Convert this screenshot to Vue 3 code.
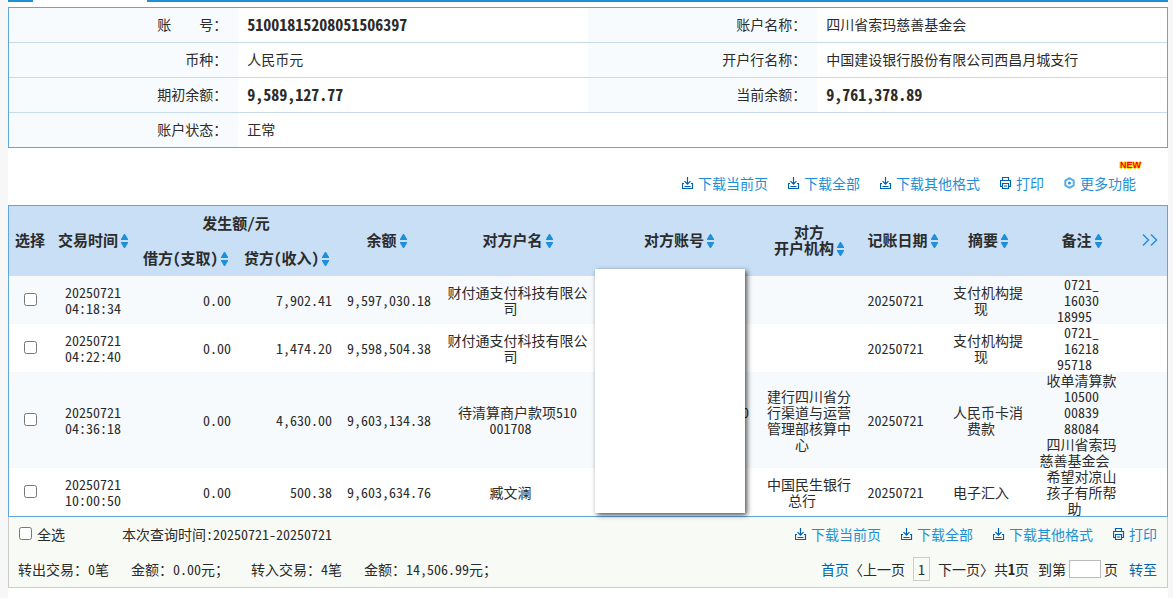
<script setup>
import { h } from 'vue'

const account = [
  [{ label: '账\u3000\u3000\u3000\u3000号：', value: '51001815208051506397', strong: true }, { label: '账户名称：', value: '四川省索玛慈善基金会' }],
  [{ label: '币种：', value: '人民币元' }, { label: '开户行名称：', value: '中国建设银行股份有限公司西昌月城支行' }],
  [{ label: '期初余额：', value: '9,589,127.77', strong: true }, { label: '当前余额：', value: '9,761,378.89', strong: true }],
  [{ label: '账户状态：', value: '正常' }],
]

const columnWidths = [42, 84, 101, 101, 99, 163, 160, 100, 87, 84, 103, 34]

const tail = '\u00a0\u00a0'
const rows = [
  {
    time: '20250721\n04:18:34', debit: '0.00', credit: '7,902.41', balance: '9,597,030.18',
    name: '财付通支付科技有限公\n司' + tail, number: '', bank: '', date: '20250721' + tail,
    summary: '支付机构提\n现' + tail, remark: '0721_\n16030\n18995' + tail,
  },
  {
    time: '20250721\n04:22:40', debit: '0.00', credit: '1,474.20', balance: '9,598,504.38',
    name: '财付通支付科技有限公\n司' + tail, number: '', bank: '', date: '20250721' + tail,
    summary: '支付机构提\n现' + tail, remark: '0721_\n16218\n95718' + tail,
  },
  {
    time: '20250721\n04:36:18', debit: '0.00', credit: '4,630.00', balance: '9,603,134.38',
    name: '待清算商户款项510\n001708' + tail, number: '0\n\u00a0',
    bank: '建行四川省分\n行渠道与运营\n管理部核算中\n心' + tail, date: '20250721' + tail,
    summary: '人民币卡消\n费款' + tail, remark: '收单清算款\n10500\n00839\n88084\n四川省索玛\n慈善基金会' + tail,
  },
  {
    time: '20250721\n10:00:50', debit: '0.00', credit: '500.38', balance: '9,603,634.76',
    name: '臧文澜' + tail, number: '', bank: '中国民生银行\n总行' + tail, date: '20250721' + tail,
    summary: '电子汇入' + tail, remark: '希望对凉山\n孩子有所帮\n助' + tail,
  },
]

const actions = [
  { icon: 'download', text: '下载当前页' },
  { icon: 'download', text: '下载全部' },
  { icon: 'download', text: '下载其他格式' },
  { icon: 'print', text: '打印' },
]

const totals = ['转出交易：0笔', '金额：0.00元；', '转入交易：4笔', '金额：14,506.99元；']

const shapes = {
  download: [
    h('path', { d: 'M5.500 0v7M2.500 4.200 5.500 7.200l3-3M2 6.500H.5v5h10v-5H9M2.500 9.500h6' }),
  ],
  print: [
    h('path', { d: 'M2.500 3.500v-3h6v3M2.500 9.500h-2v-6h10v6h-2M2.500 6.500h6v5h-6zM4 9h3' }),
  ],
  gear: [
    h('path', { d: 'M5.500 1.200 9.700 3.600v4.800L5.500 10.800 1.300 8.400V3.600z', 'stroke-width': 2, 'stroke-linejoin': 'round', stroke: '#5aade2' }),
    h('circle', { cx: 5.5, cy: 6, r: 1.6, fill: '#3b9bdb', stroke: 'none' }),
  ],
}

const Icon = (props) =>
  h('svg', { width: 12, height: 12, viewBox: '0 0 12 12', fill: 'none', stroke: '#0060b0', 'stroke-width': 1.2, 'aria-hidden': 'true' }, shapes[props.name])
Icon.props = ['name']

const Sort = () =>
  h('svg', { class: 'sort', width: 7, height: 14, viewBox: '0 0 7 14', fill: '#1e8fd8', 'aria-hidden': 'true' }, [
    h('path', { d: 'M3 0h1l3 5v1H0V5zM0 8h7v1l-3 5H3L0 9z' }),
  ])
</script>

<template>
  <main class="page">
    <div class="tabs"><span class="bar first"></span><span class="bar rest"></span></div>

    <table class="account">
      <colgroup><col class="k" /><col class="v" /><col class="k" /><col class="v" /></colgroup>
      <tbody>
        <tr v-for="(pair, i) in account" :key="i">
          <template v-for="item in pair" :key="item.label">
            <th scope="row">{{ item.label }}</th>
            <td :class="{ strong: item.strong }" :colspan="pair.length === 1 ? 3 : 1">{{ item.value }}</td>
          </template>
        </tr>
      </tbody>
    </table>

    <nav class="actions top">
      <a v-for="a in actions" :key="a.text" href="#"><Icon :name="a.icon" />{{ a.text }}</a>
      <a href="#" class="more"><Icon name="gear" />更多功能<span class="new">NEW</span></a>
    </nav>

    <section class="list">
      <table class="records">
        <colgroup><col v-for="(w, i) in columnWidths" :key="i" :style="{ width: w + 'px' }" /></colgroup>
        <thead>
          <tr>
            <th rowspan="2">选择</th>
            <th rowspan="2">交易时间<Sort /></th>
            <th colspan="2">发生额/元</th>
            <th rowspan="2">余额<Sort /></th>
            <th rowspan="2">对方户名<Sort /></th>
            <th rowspan="2">对方账号<Sort /></th>
            <th rowspan="2">对方<br />开户机构<Sort /></th>
            <th rowspan="2">记账日期<Sort /></th>
            <th rowspan="2">摘要<Sort /></th>
            <th rowspan="2">备注<Sort /></th>
            <th rowspan="2">
              <a href="#" class="expand" aria-label="展开">
                <svg width="16" height="12" viewBox="0 0 16 12" fill="none" stroke="#1e8fd8" stroke-width="1.4"><path d="M1 .5 6.500 6 1 11.500M9 .5 14.500 6 9 11.500" /></svg>
              </a>
            </th>
          </tr>
          <tr>
            <th>借方(支取)<Sort /></th>
            <th>贷方(收入)<Sort /></th>
          </tr>
        </thead>
        <tbody>
          <tr v-for="(r, i) in rows" :key="i">
            <td><input type="checkbox" :aria-label="'选择 ' + r.time" /></td>
            <td>{{ r.time }}</td>
            <td class="right">{{ r.debit }}</td>
            <td class="right">{{ r.credit }}</td>
            <td class="right">{{ r.balance }}</td>
            <td>{{ r.name }}</td>
            <td class="number">{{ r.number }}</td>
            <td>{{ r.bank }}</td>
            <td>{{ r.date }}</td>
            <td>{{ r.summary }}</td>
            <td>{{ r.remark }}</td>
            <td></td>
          </tr>
        </tbody>
      </table>
      <div class="cover"></div>
    </section>

    <footer class="foot">
      <div class="line">
        <label class="all"><input type="checkbox" />全选</label>
        <span class="period">本次查询时间:20250721-20250721</span>
        <nav class="actions">
          <a v-for="a in actions" :key="a.text" href="#"><Icon :name="a.icon" />{{ a.text }}</a>
        </nav>
      </div>
      <div class="line">
        <div class="totals"><span v-for="(t, i) in totals" :key="i">{{ t }}</span></div>
        <div class="pager">
          <a href="#">首页</a>
          <span>〈上一页</span>
          <span class="current">1</span>
          <span>下一页〉</span>
          <span>共<b>1</b>页</span>
          <label class="goto">到第<input type="text" />页</label>
          <a href="#">转至</a>
        </div>
      </div>
    </footer>
  </main>
</template>

<style>
body {
  background: #f7f7f7;
}
</style>

<style scoped>
.page {
  margin: 0 5px 0 8px;
  min-height: 100vh;
  background: #fff;
  color: #2b2b2b;
  font: 14px/16px "Noto Sans CJK SC", sans-serif;
  font-feature-settings: "hwid";
}
a {
  color: #1e8fd5;
  text-decoration: none;
}
table {
  width: 100%;
  table-layout: fixed;
  border-spacing: 0;
  box-sizing: border-box;
}
input {
  margin: 0;
}
input[type="checkbox"] {
  width: 13px;
  height: 13px;
}
.tabs {
  display: flex;
  gap: 114px;
  height: 7px;
}
.bar {
  height: 2px;
  background: #1e8fd8;
}
.first {
  width: 25px;
}
.rest {
  flex: 1;
}
.account {
  border: 1px solid #5fa6de;
}
.account .k {
  width: 19.8%;
}
.account .v {
  width: 30.2%;
}
.account th,
.account td {
  height: 32px;
  padding: 0 11px 2px 9px;
  border-bottom: 1px solid #c8d9ea;
  font-weight: normal;
  text-align: left;
  white-space: nowrap;
}
.account th {
  background: #f7fbfe;
  text-align: right;
}
.account tr:last-child > * {
  border-bottom: 0;
}
.account .strong {
  font-size: 16px;
  font-weight: bold;
}
.actions {
  display: flex;
  gap: 20px;
}
.actions a {
  display: flex;
  align-items: center;
  gap: 4px;
  white-space: nowrap;
}
.top {
  justify-content: flex-end;
  padding: 27px 32px 14px 0;
}
.more {
  position: relative;
}
.new {
  position: absolute;
  right: -5px;
  top: -15px;
  color: #f00;
  font: bold 9px/10px "Liberation Sans", sans-serif;
  text-shadow: 1px 0 #fd0, -1px 0 #fd0, 0 1px #fd0, 0 -1px #fd0;
}
.list {
  position: relative;
}
.records {
  border: 1px solid #5fa6de;
}
.records th {
  height: 33px;
  padding: 0 0 2px;
  background: #c8dff5;
  font-size: 15px;
  white-space: nowrap;
}
.sort {
  margin-left: 3px;
  vertical-align: -2px;
}
.records td {
  height: 48px;
  padding: 0 5px;
  text-align: center;
  white-space: pre;
}
.records tr:nth-child(odd) td {
  background: #f6fafd;
}
.records td.right {
  text-align: right;
}
.records td.number {
  padding-right: 10px;
  text-align: right;
}
.expand svg {
  display: block;
  margin: 0 auto;
}
.cover {
  position: absolute;
  left: 587px;
  top: 64px;
  bottom: 4px;
  width: 150px;
  background: #fff;
  box-shadow: 2px 2px 5px rgba(0, 0, 0, 0.7);
}
.foot {
  border: 1px solid #ccc;
  border-top: 0;
  background: #f8faf5;
}
.line {
  display: flex;
  align-items: center;
  box-sizing: border-box;
  height: 35px;
  padding: 0 10px 2px 9px;
  white-space: nowrap;
}
.all {
  display: flex;
  align-items: center;
  gap: 5px;
  padding-left: 1px;
}
.period {
  margin-left: 57px;
}
.line .actions {
  margin-left: auto;
}
.totals {
  display: flex;
  gap: 22px;
}
.pager {
  display: flex;
  align-items: center;
  margin-left: auto;
}
.pager a {
  color: #0066b3;
}
.current {
  margin: 0 8px;
  padding: 3px 4px;
  border: 1px solid #ccc;
}
.goto {
  display: flex;
  align-items: center;
  margin: 0 11px 0 9px;
}
.goto input {
  box-sizing: border-box;
  width: 32px;
  height: 18px;
  margin: 0 3px;
  border: 1px solid #bbb;
  background: #fff;
}
</style>
